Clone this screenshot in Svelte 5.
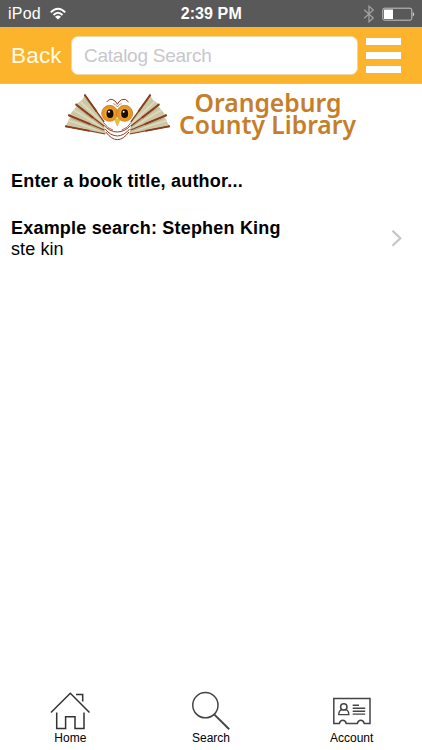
<script>
  const wing = [
    [75, 28, 133, 109],
    [49, 56, 133, 121],
    [27, 88, 133, 132],
    [18, 121, 136, 144]
  ];
</script>

<div class="screen">
  <header class="status">
    <div class="carrier">
      <span>iPod</span>
      <svg width="18" height="14" viewBox="0 0 18 14" fill="none" stroke="#fff" stroke-width="2">
        <path d="M1.8 5.4Q9 -1.8 16.2 5.4M4.5 8Q9 3.6 13.5 8" />
        <path d="M9 12.6L6 9.7Q9 7.3 12 9.7Z" fill="#fff" stroke="none" />
      </svg>
    </div>
    <div class="time">2:39 PM</div>
    <div class="indicators">
      <svg width="12" height="18" viewBox="0 0 12 18" fill="none" stroke="#a3a3a3" stroke-width="1.2">
        <path d="M1.2 4.8L10.3 13L6 16.8V1.2L10.3 5L1.2 13.2" />
      </svg>
      <svg width="33" height="15" viewBox="0 0 33 15">
        <rect x="0.8" y="1.2" width="29" height="12" rx="1.8" fill="none" stroke="#c4c4c4" />
        <rect x="2" y="2.5" width="9" height="9.5" fill="#fff" />
        <path d="M30.8 4.7Q33.2 7.2 30.8 9.7Z" fill="#ddd" />
      </svg>
    </div>
  </header>

  <nav class="bar">
    <span class="back">Back</span>
    <div class="field"><span>Catalog Search</span></div>
    <div class="menu"><i></i><i></i><i></i></div>
  </nav>

  <div class="brand">
    <svg width="115" height="60" viewBox="0 0 345 180">
      {#each ['', 'translate(345 0) scale(-1 1)'] as flip}
        <g transform={flip}>
          <path d="M75 28L133 104L136 144L18 120L32 90L28 88L51 59L49 55L66 42Z" fill="#cbc8a6" />
          <path d="M62 48L130 112M41 72L130 125M25 104L134 137" stroke="#dcd9bd" stroke-width="6" />
          <path d="M79 40L131 105M56 67L131 125M35 97L134 137" stroke="#a5a37c" stroke-width="2.4" />
          {#each wing as [x1, y1, x2, y2]}
            <line {x1} {y1} {x2} {y2} stroke="#8e3b1c" stroke-width="3.8" />
            <line {x1} {y1} x2={x1 + (x2 - x1) * 0.6} y2={y1 + (y2 - y1) * 0.6} stroke="#8e3b1c" stroke-width="5.5" />
            <circle cx={x1} cy={y1} r="3.4" fill="#8e3b1c" />
          {/each}
        </g>
      {/each}
      <path d="M130 108L172 100L215 108L208 138Q192 162 172 162Q153 162 137 138Z" fill="#fff" />
      <g fill="none" stroke="#963b22" stroke-linecap="round">
        <path d="M141 47Q150 35 162 43Q170 48 172 55Q175 47 185 41Q197 36 205 47" stroke-width="3" />
        <path d="M160 53Q169 55 172 63Q176 55 184 53" stroke-width="1.6" />
        <path d="M131 110Q142 128 158 132M213 110Q202 128 186 132" stroke-width="2.4" />
        <path d="M133 119Q148 137 172 138Q196 137 211 119" stroke-width="3" />
        <path d="M136 130Q151 149 172 150Q193 149 208 130" stroke-width="3" />
        <path d="M138 139Q155 161 172 161Q190 161 206 139" stroke-width="3" />
      </g>
      {#each [149, 194] as cx}
        <circle {cx} cy="82" r="24" fill="#e99a22" stroke="#b56a1b" stroke-width="2" />
        <circle {cx} cy="82" r="17" fill="#f3a82f" stroke="#d98a1c" stroke-width="2" />
      {/each}
      <ellipse cx="150" cy="83" rx="10.5" ry="13" fill="#1b0b03" />
      <ellipse cx="194" cy="83" rx="10.5" ry="13" fill="#1b0b03" />
      <circle cx="147" cy="77" r="3" fill="#fff" />
      <circle cx="191" cy="77" r="3" fill="#fff" />
      <path d="M163 101Q171 95 181 101L172 121Z" fill="#edc02c" stroke="#c9a032" />
    </svg>
    <svg class="name" width="190" height="60" viewBox="0 0 190 60">
      <text x="18.5" y="26.3" textLength="147" lengthAdjust="spacingAndGlyphs">Orangeburg</text>
      <text x="3" y="48" textLength="177" lengthAdjust="spacingAndGlyphs">County Library</text>
    </svg>
  </div>

  <main>
    <p class="hint">Enter a book title, author...</p>
    <div class="example">
      <div>
        <p class="title">Example search: Stephen King</p>
        <p class="sub">ste kin</p>
      </div>
      <svg width="12" height="18" viewBox="0 0 12 18" fill="none" stroke="#c5c5ca" stroke-width="2.2">
        <path d="M1.5 0.7L9.3 8.2L1.5 15.7" />
      </svg>
    </div>
  </main>

  <footer>
    <div class="tab">
      <svg width="42" height="40" viewBox="0 0 42 40" fill="none" stroke="#333" stroke-width="1.5">
        <path d="M2 22.5L21.3 3.2L40.5 22.5M27 4.5H33.7V11.5" />
        <path d="M7.7 22.5V38.5H16.6V26.8H26V38.5H35V22.5" />
      </svg>
      <span>Home</span>
    </div>
    <div class="tab">
      <svg width="42" height="40" viewBox="0 0 42 40" fill="none" stroke="#444" stroke-width="1.5">
        <circle cx="15.4" cy="15.2" r="12.6" />
        <path d="M24.2 24.4L39.2 39.2" stroke-width="1.9" />
      </svg>
      <span>Search</span>
    </div>
    <div class="tab">
      <svg width="42" height="40" viewBox="0 0 42 40" fill="none" stroke="#444" stroke-width="1.5">
        <path d="M2.8 8.6H39V33.4H33.2Q32.5 30.3 29.8 30.3Q27.1 30.3 26.4 33.4H15.2Q14.5 30.3 11.8 30.3Q9.1 30.3 8.4 33.4H2.8Z" />
        <circle cx="12.8" cy="16.9" r="3.2" />
        <path d="M10.7 19.6Q7.8 20.5 7.8 24.6H17.8Q17.8 20.5 14.9 19.6M21.7 15.2H28M21.7 18.3H34.2M21.7 21.2H34.2M21.7 24.1H34.2" stroke-width="1.4" />
      </svg>
      <span>Account</span>
    </div>
  </footer>
</div>

<style>
  :global(body) { margin: 0; background: #fff; }
  .screen {
    width: 422px; height: 750px; display: flex; flex-direction: column;
    overflow: hidden; background: #fff; color: #000;
    font-family: "Liberation Sans", Arial, sans-serif;
  }
  p { margin: 0; }
  svg { display: block; flex: none; }
  .status {
    height: 27px; flex: none; box-sizing: border-box; background: #595959;
    display: grid; grid-template-columns: 1fr auto 1fr; align-items: center;
    padding: 1px 7.5px 0 8px; color: #fff; font-size: 16px; line-height: 26px;
  }
  .carrier { display: flex; align-items: center; gap: 8px; letter-spacing: .2px; }
  .time { font-weight: bold; letter-spacing: .1px; }
  .indicators { display: flex; justify-content: flex-end; align-items: center; gap: 7px; }
  .bar {
    height: 57px; flex: none; box-sizing: border-box; background: #fbb42b;
    border-bottom: 1px solid #f5bb4e; display: flex; align-items: center; padding-left: 11px;
  }
  .back { width: 60px; padding-top: 2px; box-sizing: border-box; color: #fffbea; font-size: 22.5px; letter-spacing: .2px; }
  .field {
    box-sizing: border-box; width: 287px; height: 39px; border-radius: 7px; background: #fff;
    border: 1px solid #eed7a4; padding: 1px 0 0 12px; display: flex; align-items: center;
    color: #c7c7cc; font-size: 19px; letter-spacing: -.25px;
  }
  .menu { margin: 1px 0 0 8px; display: flex; flex-direction: column; gap: 6.6px; }
  .menu i { display: block; width: 35px; height: 7.3px; background: #fff; }
  .brand { height: 62px; flex: none; display: flex; padding: 2px 0 0 60px; box-sizing: border-box; }
  .name { margin-left: 1px; }
  .name text {
    font-family: "Noto Sans", "Open Sans", sans-serif; font-weight: 600;
    font-size: 24.5px; fill: #c67e2b;
  }
  main { flex: 1; padding: 24px 19px 0 11px; }
  .hint, .title { font-size: 18px; line-height: 21px; font-weight: bold; letter-spacing: .2px; }
  .hint { padding-top: 1px; margin-bottom: -1px; }
  .example { margin-top: 27px; display: flex; justify-content: space-between; align-items: center; }
  .sub { font-size: 18px; line-height: 21px; letter-spacing: .1px; }
  footer { height: 60px; flex: none; display: flex; }
  .tab { flex: 1; display: flex; flex-direction: column; align-items: center; }
  .tab span { font-size: 12px; line-height: 16px; }
</style>
